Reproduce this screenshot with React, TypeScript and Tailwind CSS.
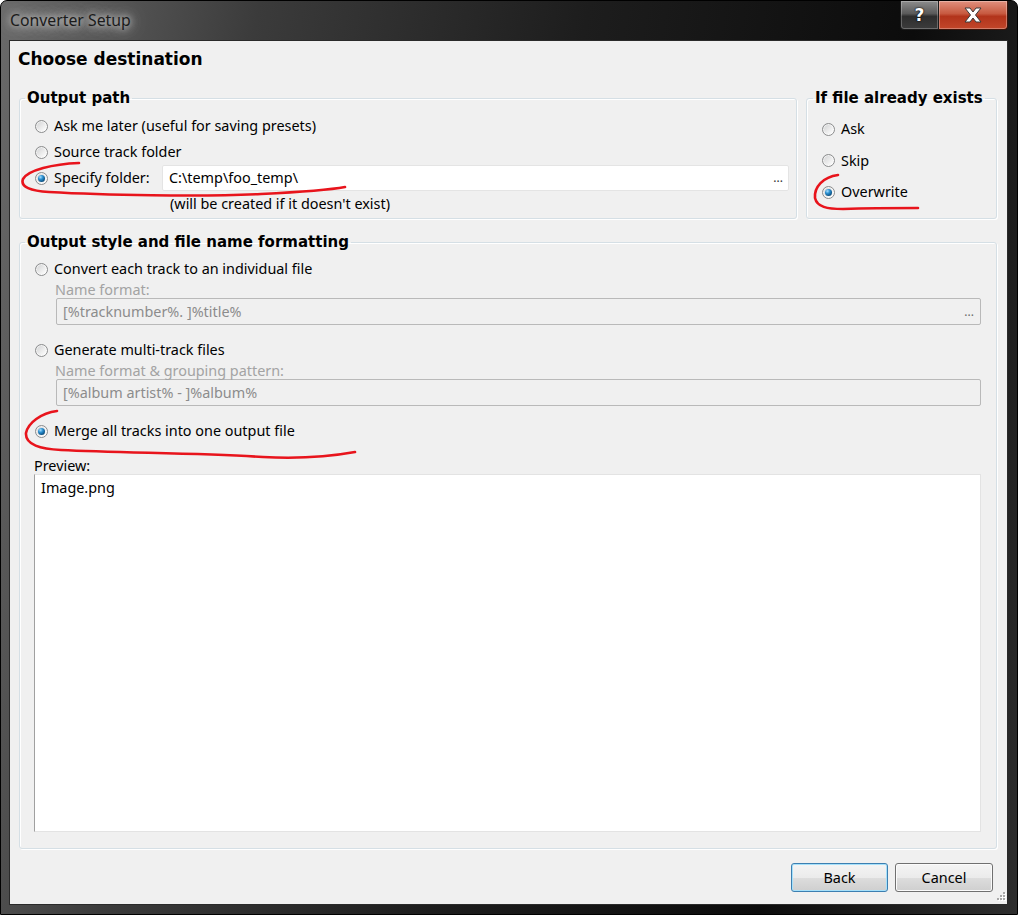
import React from "react";

const UI_FONT = "font-['Noto_Sans','Open_Sans',sans-serif]";
const BOLD_FONT = "font-['DejaVu_Sans','Verdana',sans-serif] font-bold";

function Radio({ checked }: { checked?: boolean }) {
  return (
    <span className="flex h-[13px] w-[13px] shrink-0 items-center justify-center rounded-full border border-[#8b8c8d] bg-[linear-gradient(135deg,#cfd0d1,#f4f4f4_70%,#ffffff)] shadow-[inset_0_0_0_1px_rgba(255,255,255,0.6)]">
      {checked && (
        <span className="h-[7px] w-[7px] rounded-full bg-[radial-gradient(circle_at_35%_30%,#a8e0ff_0%,#2a8fd0_35%,#0f5688_70%,#0a3453_100%)]" />
      )}
    </span>
  );
}

function RadioRow({ label, checked, className = "" }: { label: string; checked?: boolean; className?: string }) {
  return (
    <div className={`flex h-[26px] items-center gap-[6px] ${className}`}>
      <Radio checked={checked} />
      <span className="text-black">{label}</span>
    </div>
  );
}

function GroupBox({
  title,
  legendClass,
  className = "",
  children,
}: {
  title: string;
  legendClass: string;
  className?: string;
  children: React.ReactNode;
}) {
  return (
    <fieldset
      className={`min-w-0 rounded-[3px] border border-[#d5dfe5] shadow-[inset_1px_1px_0_#ffffff,1px_1px_0_#ffffff] ${className}`}
    >
      <legend className={`whitespace-nowrap px-[2px] text-[15px] leading-[18px] text-black ${BOLD_FONT} ${legendClass}`}>
        {title}
      </legend>
      {children}
    </fieldset>
  );
}

function DisabledInput({ value, dots }: { value: string; dots?: boolean }) {
  return (
    <div className="flex h-[27px] items-center justify-between rounded-[2px] border border-[#b9b9b9] bg-[#f0f0f0] pl-[6px] pr-[6px] text-[#8c8c8c]">
      <span>{value}</span>
      {dots && <span className="text-[12px] leading-none text-[#6b6b6b]">...</span>}
    </div>
  );
}

function WinButton({ label, focused }: { label: string; focused?: boolean }) {
  return (
    <button
      className={`h-[29px] w-full rounded-[3px] border text-black ${
        focused
          ? "border-[#3c7fb1] shadow-[inset_0_0_0_1px_#a6e0fa]"
          : "border-[#707070] shadow-[inset_0_0_0_1px_#fbfbfb]"
      } bg-[linear-gradient(to_bottom,#f4f4f4_0%,#ebebeb_50%,#dddddd_51%,#cfcfcf_100%)]`}
    >
      {label}
    </button>
  );
}

export default function App() {
  return (
    <div
      className={`relative flex h-[915px] w-[1018px] flex-col overflow-hidden rounded-t-[7px] border border-black bg-[linear-gradient(100deg,#6a6a6a_0%,#3b3b3b_22%,#1d1d1d_50%,#0c0c0c_78%,#2e2e2e_100%)] text-[14.4px] leading-[20px] ${UI_FONT}`}
    >
      {/* Title bar */}
      <div className="flex h-[39px] shrink-0 items-start justify-between pl-[9px] pr-[9px]">
        <div className="pt-[8px] text-[15.8px] leading-[22px] text-[#1b1b1b] [text-shadow:0_0_6px_#d8d8d8,0_0_12px_#c8c8c8,0_0_18px_#b0b0b0]">
          Converter Setup
        </div>
        <div className="flex">
          <div className="flex h-[29px] w-[39px] items-center justify-center rounded-bl-[4px] border border-t-0 border-[#1b1b1b] bg-[linear-gradient(to_bottom,#8d8d8d_0%,#5a5a5a_45%,#2e2e2e_55%,#3c3c3c_100%)] shadow-[inset_0_0_0_1px_rgba(255,255,255,0.25)]">
            <span className="font-['DejaVu_Sans',sans-serif] text-[17px] font-bold leading-none text-white [text-shadow:0_0_2px_#000,0_0_1px_#000]">
              ?
            </span>
          </div>
          <div className="flex h-[29px] w-[69px] items-center justify-center rounded-br-[4px] border border-l-0 border-t-0 border-[#3b1208] bg-[linear-gradient(to_bottom,#e0907e_0%,#c75a40_45%,#b2341b_55%,#c2462a_100%)] shadow-[inset_0_0_0_1px_rgba(255,255,255,0.3)]">
            <svg width="22" height="16" viewBox="0 0 22 16">
              <path
                d="M3 1 L8 1 L11 5 L14 1 L19 1 L13.5 8 L19 15 L14 15 L11 11 L8 15 L3 15 L8.5 8 Z"
                fill="#ffffff"
                stroke="#3a3a3a"
                strokeWidth="1"
                strokeLinejoin="round"
              />
            </svg>
          </div>
        </div>
      </div>

      {/* Client area */}
      <div className="relative ml-[8px] mr-[9px] mb-[9px] flex flex-1 flex-col border border-[#2a2a2a] bg-[#f0f0f0] pl-[9px] pr-[10px]">
        <h1 className={`-ml-[1px] pt-[7px] text-[17px] leading-[22px] text-black ${BOLD_FONT}`}>Choose destination</h1>

        {/* Top row */}
        <div className="mt-[19px] flex gap-[9px]">
          <GroupBox title="Output path" legendClass="ml-[5px]" className="flex-1">
            <div className="pb-[5px] pl-[15px] pr-[7px] pt-[6px]">
              <RadioRow label="Ask me later (useful for saving presets)" />
              <RadioRow label="Source track folder" />
              <div className="flex h-[26px] items-center">
                <div className="flex w-[127px] shrink-0 items-center gap-[6px]">
                  <Radio checked />
                  <span>Specify folder:</span>
                </div>
                <div className="flex h-[26px] flex-1 items-center justify-between rounded-[2px] border border-[#e4e4e4] bg-white pl-[6px] pr-[5px]">
                  <span>C:\temp\foo_temp\</span>
                  <span className="text-[12px] leading-none text-[#333]">...</span>
                </div>
              </div>
              <div className="mt-[4px] ml-[135px] leading-[18px]">(will be created if it doesn't exist)</div>
            </div>
          </GroupBox>

          <GroupBox title="If file already exists" legendClass="ml-[6px]" className="w-[191px] shrink-0">
            <div className="flex flex-col gap-[5.5px] pl-[15px] pt-[9px]">
              <RadioRow label="Ask" />
              <RadioRow label="Skip" />
              <RadioRow label="Overwrite" checked />
            </div>
          </GroupBox>
        </div>

        {/* Output style */}
        <GroupBox title="Output style and file name formatting" legendClass="ml-[5px]" className="mt-[14px]">
          <div className="pb-[16px] pl-[14px] pr-[15px] pt-[5px]">
            <RadioRow label="Convert each track to an individual file" className="pl-[1px]" />
            <div className="ml-[21px] h-[16px] leading-[16px] text-[#a3a3a3]">Name format:</div>
            <div className="ml-[22px]">
              <DisabledInput value="[%tracknumber%. ]%title%" dots />
            </div>

            <RadioRow label="Generate multi-track files" className="mt-[12px] pl-[1px]" />
            <div className="ml-[21px] h-[16px] leading-[16px] text-[#a3a3a3]">Name format &amp; grouping pattern:</div>
            <div className="ml-[22px]">
              <DisabledInput value="[%album artist% - ]%album%" />
            </div>

            <RadioRow label="Merge all tracks into one output file" checked className="mt-[12px] pl-[1px]" />

            <div className="mt-[13px] h-[17px] leading-[17px]">Preview:</div>
            <div className="h-[358px] border border-[#e3e3e3] border-l-[#a0a0a0] bg-white pl-[6px] pt-[3px]">
              Image.png
            </div>
          </div>
        </GroupBox>

        {/* Buttons */}
        <div className="mt-[14px] flex justify-end gap-[7px] pr-[4px]">
          <div className="w-[97px]">
            <WinButton label="Back" focused />
          </div>
          <div className="w-[98px]">
            <WinButton label="Cancel" />
          </div>
        </div>

        {/* Resize grip */}
        <svg className="absolute bottom-[1px] right-[1px]" width="12" height="12" viewBox="0 0 12 12">
          {[
            [9, 1],
            [6, 4],
            [9, 4],
            [3, 7],
            [6, 7],
            [9, 7],
          ].map(([x, y], i) => (
            <g key={i}>
              <rect x={x + 1} y={y + 1} width="2" height="2" fill="#ffffff" />
              <rect x={x} y={y} width="2" height="2" fill="#a8a8a8" />
            </g>
          ))}
        </svg>
      </div>

      {/* Red hand-drawn marks */}
      <svg
        className="pointer-events-none absolute left-0 top-0"
        width="1018"
        height="915"
        viewBox="0 0 1018 915"
        fill="none"
        stroke="#e8141c"
        strokeWidth="2.6"
        strokeLinecap="round"
      >
        <path d="M78 162 C 52 163, 27 169, 22 178 C 19 186, 30 190, 48 191 C 100 194, 200 196, 260 193 C 300 191, 328 189, 344 186" />
        <path d="M837 174 C 822 176, 813 186, 814 197 C 816 206, 826 208, 842 208 C 872 207, 900 207, 917 207" />
        <path d="M56 410 C 40 412, 27 422, 25 432 C 24 444, 40 448, 60 449 C 120 452, 200 452, 262 456 C 300 458, 332 455, 354 451" />
      </svg>
    </div>
  );
}
